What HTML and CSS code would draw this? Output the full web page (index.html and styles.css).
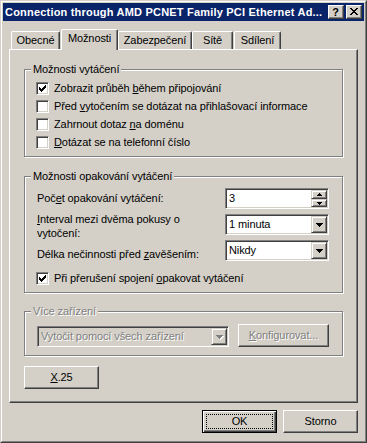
FILE: index.html
```html
<!DOCTYPE html>
<html lang="cs">
<head>
<meta charset="utf-8">
<title>Možnosti</title>
<link rel="stylesheet" href="styles.css">
</head>
<body>
<div class="window">
  <div class="frame">
    <div class="titlebar">
      <span class="title">Connection through AMD PCNET Family PCI Ethernet Ad...</span>
      <span class="capbtn help">?</span>
      <span class="capbtn close"><svg width="8" height="7" viewBox="0 0 8 7" shape-rendering="crispEdges"><path d="M0 0h2v1H0zM6 0h2v1H6zM1 1h2v1H1zM5 1h2v1H5zM2 2h4v1H2zM3 3h2v1H3zM2 4h4v1H2zM1 5h2v1H1zM5 5h2v1H5zM0 6h2v1H0zM6 6h2v1H6z" fill="#000"/></svg></span>
    </div>
    <div class="client">
      <div class="tabs">
        <div class="tab t1">Obecné</div>
        <div class="tab sel t2">Možnosti</div>
        <div class="tab t3">Zabezpečení</div>
        <div class="tab t4">Sítě</div>
        <div class="tab t5">Sdílení</div>
      </div>
      <div class="panel">
        <div class="group g1">
          <div class="legend">Možnosti vytáčení</div>
          <div class="checks">
            <div class="check"><span class="cb"><svg width="7" height="7" viewBox="0 0 7 7" shape-rendering="crispEdges"><path d="M6 0h1v1H6zM5 1h2v1H5zM0 2h1v1H0zM4 2h3v1H4zM0 3h2v1H0zM3 3h3v1H3zM0 4h5v1H0zM1 5h3v1H1zM2 6h1v1H2z" fill="#000"/></svg></span><span>Zobrazit průběh <u>b</u>ěhem připojování</span></div>
            <div class="check"><span class="cb"></span><span>Před <u>v</u>ytočením se dotázat na přihlašovací informace</span></div>
            <div class="check"><span class="cb"></span><span>Zahrnout dotaz <u>n</u>a doménu</span></div>
            <div class="check"><span class="cb"></span><span><u>D</u>otázat se na telefonní číslo</span></div>
          </div>
        </div>
        <div class="group g2">
          <div class="legend">Možnosti opakování vytáčení</div>
          <div class="opts">
            <div class="row">
              <span class="lbl">Poč<u>e</u>t opakování vytáčení:</span>
              <div class="field ctl"><span class="val">3</span>
                <div class="spin">
                  <div class="sb"><svg width="5" height="3" viewBox="0 0 5 3" shape-rendering="crispEdges"><path d="M2 0h1v1H2zM1 1h3v1H1zM0 2h5v1H0z" fill="#000"/></svg></div>
                  <div class="sb"><svg width="5" height="3" viewBox="0 0 5 3" shape-rendering="crispEdges"><path d="M0 0h5v1H0zM1 1h3v1H1zM2 2h1v1H2z" fill="#000"/></svg></div>
                </div>
              </div>
            </div>
            <div class="row">
              <span class="lbl two"><u>I</u>nterval mezi dvěma pokusy o<br>vytočení:</span>
              <div class="field ctl"><span class="val">1 minuta</span>
                <div class="dd"><svg width="7" height="4" viewBox="0 0 7 4" shape-rendering="crispEdges"><path d="M0 0h7v1H0zM1 1h5v1H1zM2 2h3v1H2zM3 3h1v1H3z" fill="#000"/></svg></div>
              </div>
            </div>
            <div class="row">
              <span class="lbl low">Délka nečinnosti před <u>z</u>avěšením:</span>
              <div class="field ctl"><span class="val">Nikdy</span>
                <div class="dd"><svg width="7" height="4" viewBox="0 0 7 4" shape-rendering="crispEdges"><path d="M0 0h7v1H0zM1 1h5v1H1zM2 2h3v1H2zM3 3h1v1H3z" fill="#000"/></svg></div>
              </div>
            </div>
            <div class="check redial"><span class="cb"><svg width="7" height="7" viewBox="0 0 7 7" shape-rendering="crispEdges"><path d="M6 0h1v1H6zM5 1h2v1H5zM0 2h1v1H0zM4 2h3v1H4zM0 3h2v1H0zM3 3h3v1H3zM0 4h5v1H0zM1 5h3v1H1zM2 6h1v1H2z" fill="#000"/></svg></span><span>Při přerušení spojení <u>o</u>pakovat vytáčení</span></div>
          </div>
        </div>
        <div class="group g3">
          <div class="legend dis">Více zařízení</div>
          <div class="devrow">
            <div class="field combo-dis"><span class="val dis">Vytočit pomocí všech zařízení</span>
              <div class="dd"><svg width="8" height="5" viewBox="0 0 8 5" shape-rendering="crispEdges"><path d="M1 1h7v1H1zM2 2h5v1H2zM3 3h3v1H3zM4 4h1v1H4z" fill="#fff"/><path d="M0 0h7v1H0zM1 1h5v1H1zM2 2h3v1H2zM3 3h1v1H3z" fill="#808080"/></svg></div>
            </div>
            <div class="btn cfg dis"><span><u>K</u>onfigurovat...</span></div>
          </div>
        </div>
        <div class="btn x25"><span><u>X</u>.25</span></div>
      </div>
      <div class="footer">
        <div class="btn default"><span class="focus">OK</span></div>
        <div class="btn">Storno</div>
      </div>
    </div>
  </div>
</div>
</body>
</html>
```
FILE: styles.css
```css
* { box-sizing: border-box; }
html, body { margin: 0; padding: 0; background: #d4d0c8; }
body {
  font-family: "Liberation Sans", Arial, sans-serif;
  font-size: 11px;
  line-height: 13px;
  letter-spacing: -0.1px;
  color: #000;
}
u { text-decoration: underline; text-underline-offset: 1px; }

.window {
  width: 367px;
  height: 443px;
  border: 1px solid;
  border-color: #d4d0c8 #404040 #404040 #d4d0c8;
  background: #d4d0c8;
}
.frame {
  height: 100%;
  border: 1px solid;
  border-color: #fff #808080 #808080 #fff;
  padding: 1px;
  display: flex;
  flex-direction: column;
}

/* title bar */
.titlebar {
  flex: none;
  height: 18px;
  background: #0a246a;
  display: flex;
  align-items: center;
  padding: 0 2px;
}
.title {
  flex: 1;
  color: #fff;
  font-weight: bold;
  font-size: 11px;
  letter-spacing: 0.2px;
  white-space: nowrap;
}
.capbtn {
  flex: none;
  width: 16px;
  height: 14px;
  background: #d4d0c8;
  border: 1px solid;
  border-color: #fff #404040 #404040 #fff;
  box-shadow: inset -1px -1px #808080;
  display: flex;
  align-items: center;
  justify-content: center;
}
.capbtn + .capbtn { margin-left: 2px; }
.help { font-weight: bold; font-size: 11px; line-height: 12px; padding-right: 1px; letter-spacing: 0; }
.close svg { display: block; margin: 0 1px 1px 0; }

/* client */
.client {
  flex: 1;
  display: flex;
  flex-direction: column;
  padding: 0 6px;
}
.tabs {
  display: flex;
  align-items: flex-end;
  height: 21px;
  margin-top: 8px;
  margin-bottom: -1px;
  padding-left: 2px;
}
.tab {
  height: 19px;
  border: 1px solid;
  border-bottom: none;
  border-color: #fff #404040 #fff #fff;
  box-shadow: inset -1px 0 #808080;
  border-radius: 2px 2px 0 0;
  display: flex;
  align-items: center;
  justify-content: center;
  padding-bottom: 1px;
  white-space: nowrap;
}
.tab.sel {
  height: 21px;
  position: relative;
  z-index: 1;
  background: #d4d0c8;
  padding-bottom: 4px;
}
.t1 { width: 49px; margin-right: 1px; }
.t2 { width: 57px; }
.t3 { width: 74px; }
.t4 { width: 41px; margin-right: 1px; }
.t5 { width: 47px; }

.panel {
  height: 354px;
  border: 1px solid;
  border-color: #fff #404040 #404040 #fff;
  box-shadow: inset -1px -1px #808080;
  padding: 0 13px 0 14px;
}

/* group boxes */
.group {
  width: 319px;
  border: 1px solid #808080;
  box-shadow: inset 1px 1px #fff, 1px 1px #fff;
}
.g1 { margin-top: 19px; }
.g2 { margin-top: 19px; }
.g3 { margin-top: 18px; }
.legend {
  width: fit-content;
  margin: -7px 0 0 6px;
  padding: 0 2px;
  background: #d4d0c8;
  line-height: 13px;
}
.dis { color: #808080; text-shadow: 1px 1px 0 #fff; }

.checks { padding: 3px 0 5px 11px; }
.check {
  height: 18px;
  display: flex;
  align-items: center;
  white-space: nowrap;
}
.cb {
  flex: none;
  width: 13px;
  height: 13px;
  border: 1px solid;
  border-color: #808080 #fff #fff #808080;
  box-shadow: inset 1px 1px #404040, inset -1px -1px #d4d0c8;
  background: #fff;
  padding: 2px;
  margin-right: 5px;
}
.cb svg { display: block; }

.opts { padding: 5px 13px 5px 11px; }
.row {
  height: 21px;
  display: flex;
  align-items: center;
  justify-content: space-between;
}
.row + .row { margin-top: 5px; }
.lbl { padding-left: 1px; white-space: nowrap; }
.lbl.two { align-self: flex-start; line-height: 14px; margin-top: -2px; }
.lbl.low { align-self: flex-end; }
.redial { margin-top: 8px; }

/* fields */
.field {
  height: 21px;
  display: flex;
  border: 1px solid;
  border-color: #808080 #fff #fff #808080;
  box-shadow: inset 1px 1px #404040, inset -1px -1px #d4d0c8;
  background: #fff;
  padding: 1px;
}
.ctl { width: 104px; }
.val {
  flex: 1;
  padding-left: 2px;
  line-height: 17px;
  white-space: nowrap;
  overflow: hidden;
}
.dd, .sb {
  flex: none;
  width: 16px;
  background: #d4d0c8;
  border: 1px solid;
  border-color: #d4d0c8 #404040 #404040 #d4d0c8;
  box-shadow: inset 1px 1px #fff, inset -1px -1px #808080;
  display: flex;
  align-items: center;
  justify-content: center;
}
.dd svg { display: block; }
.spin { flex: none; display: flex; flex-direction: column; }
.sb { height: 9px; }
.sb + .sb { height: 8px; }
.sb svg { display: block; }

.devrow {
  display: flex;
  align-items: flex-end;
  justify-content: space-between;
  padding: 6px 13px 8px 12px;
}
.combo-dis { width: 192px; background: #d4d0c8; }
.combo-dis .dd svg { margin: 1px 0 0 1px; }

/* buttons */
.btn {
  flex: none;
  width: 75px;
  height: 23px;
  border: 1px solid;
  border-color: #fff #404040 #404040 #fff;
  box-shadow: inset -1px -1px #808080;
  display: flex;
  align-items: center;
  justify-content: center;
  white-space: nowrap;
}
.cfg { width: 91px; }
.x25 { margin-top: 10px; }
.btn.default {
  border-color: #000;
  box-shadow: inset 1px 1px #fff, inset -1px -1px #404040, inset -2px -2px #808080;
  padding: 3px;
}
.focus {
  flex: 1;
  align-self: stretch;
  border: 1px dotted #000;
  display: flex;
  align-items: center;
  justify-content: center;
}
.footer {
  display: flex;
  justify-content: flex-end;
  gap: 6px;
  margin-top: 7px;
}
```
